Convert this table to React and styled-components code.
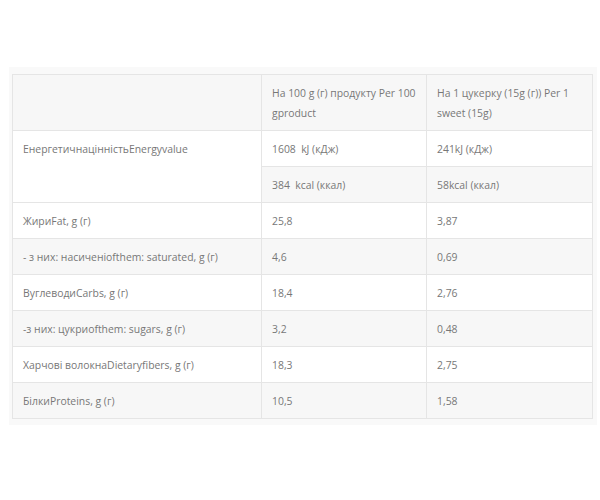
import React from "react"
import styled, { createGlobalStyle } from "styled-components"

const Global = createGlobalStyle`
  html, body {
    margin: 0;
    padding: 0;
    background: #fff;
  }
  body {
    font-family: "Open Sans", "Liberation Sans", sans-serif;
  }
`

const Page = styled.div`
  padding: 67px 3px 0 9px;
`

const Panel = styled.div`
  width: 588px;
  box-sizing: border-box;
  padding: 7px 5px 6px 3px;
  background: #f9f9f9;
`

const Table = styled.table`
  width: 580px;
  table-layout: fixed;
  border-collapse: collapse;
  font-size: 10.4px;
  line-height: 20px;
  color: #777;
  background: #fff;
`

const Cell = styled.td`
  border: 1px solid #e5e5e5;
  padding: 8px 8px 7px 10px;
  vertical-align: top;
  background: ${p => (p.$shade ? "#f7f7f7" : "#fff")};
`

const rows = [
  { name: "ЖириFat, g (г)", a: "25,8", b: "3,87" },
  { name: "- з них: насиченіofthem: saturated, g (г)", a: "4,6", b: "0,69", shade: true },
  { name: "ВуглеводиCarbs, g (г)", a: "18,4", b: "2,76" },
  { name: "-з них: цукриofthem: sugars, g (г)", a: "3,2", b: "0,48", shade: true },
  { name: "Харчові волокнаDietaryfibers, g (г)", a: "18,3", b: "2,75" },
  { name: "БілкиProteins, g (г)", a: "10,5", b: "1,58", shade: true },
]

const App = () => (
  <Page>
    <Global />
    <Panel>
      <Table>
        <colgroup>
          <col style={{ width: 249 }} />
          <col style={{ width: 165 }} />
          <col style={{ width: 166 }} />
        </colgroup>
        <tbody>
          <tr>
            <Cell $shade />
            <Cell $shade>На 100 g (г) продукту Per 100 gproduct</Cell>
            <Cell $shade>На 1 цукерку (15g (г)) Per 1 sweet (15g)</Cell>
          </tr>
          <tr>
            <Cell rowSpan={2}>ЕнергетичнацінністьEnergyvalue</Cell>
            <Cell>1608&nbsp; kJ (кДж)</Cell>
            <Cell>241kJ (кДж)</Cell>
          </tr>
          <tr>
            <Cell $shade>384&nbsp; kcal (ккал)</Cell>
            <Cell $shade>58kcal (ккал)</Cell>
          </tr>
          {rows.map(r => (
            <tr key={r.name}>
              <Cell $shade={r.shade}>{r.name}</Cell>
              <Cell $shade={r.shade}>{r.a}</Cell>
              <Cell $shade={r.shade}>{r.b}</Cell>
            </tr>
          ))}
        </tbody>
      </Table>
    </Panel>
  </Page>
)

export default App
